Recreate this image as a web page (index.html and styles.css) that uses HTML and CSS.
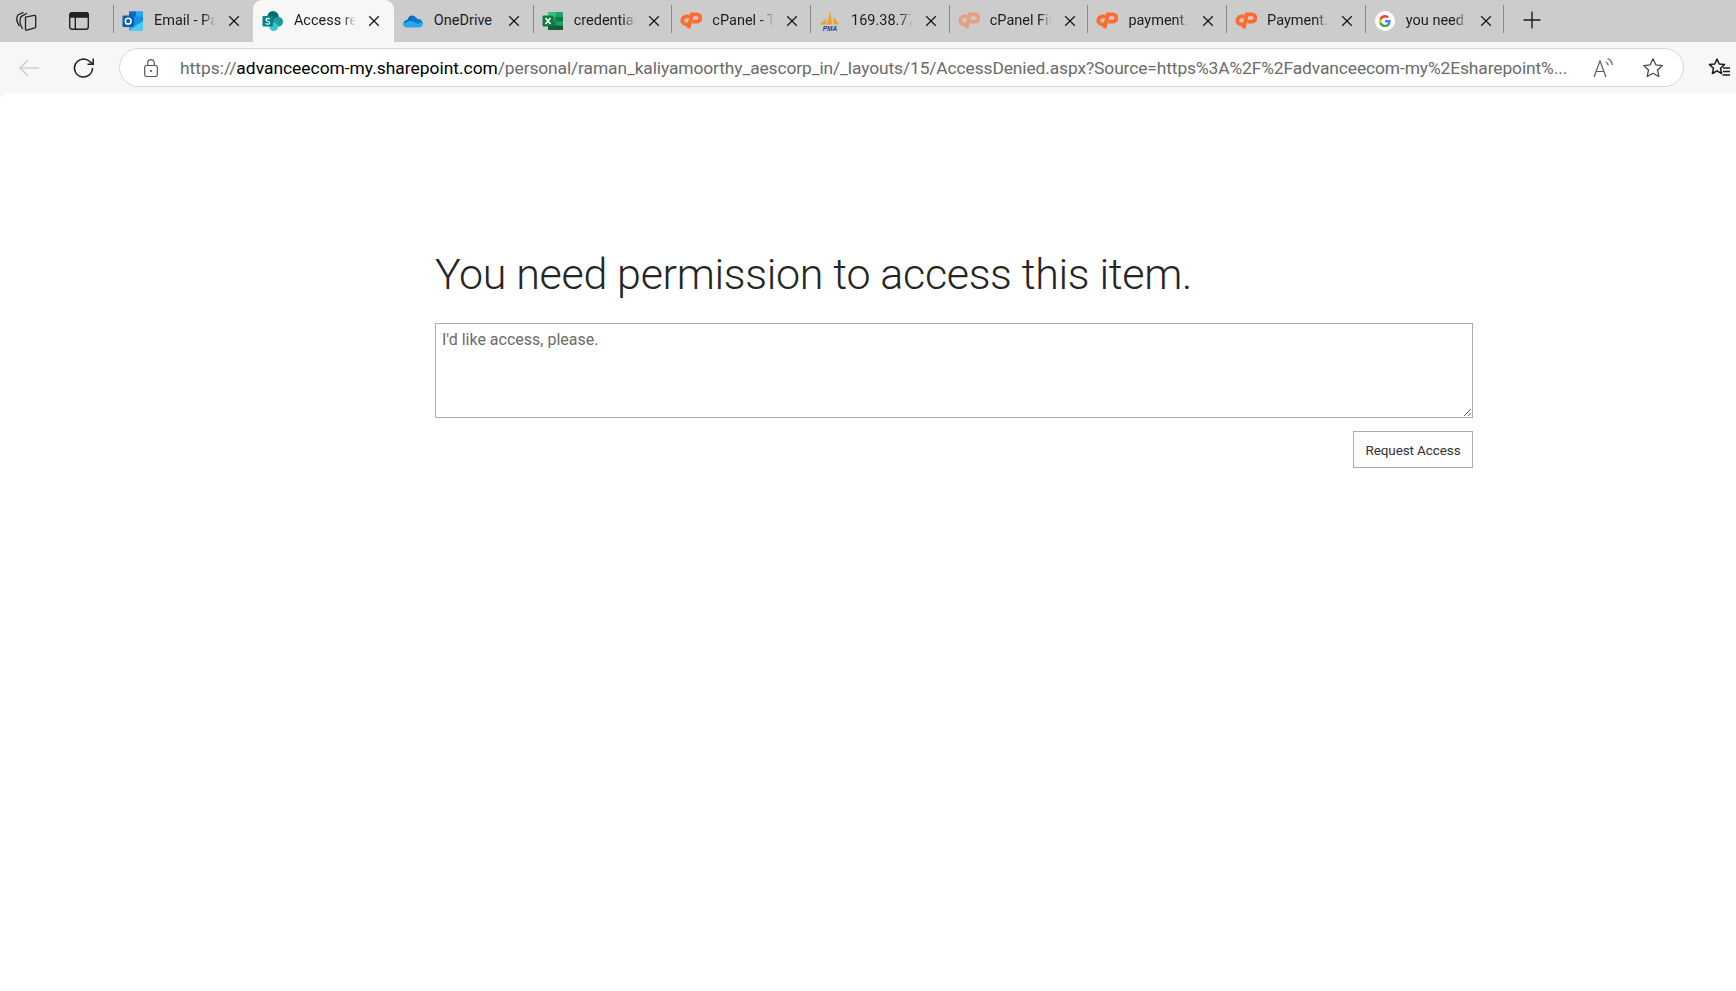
FILE: index.html
```html
<!DOCTYPE html>
<html lang="en">
<head>
<meta charset="utf-8">
<title>Access required</title>
<link rel="stylesheet" href="styles.css">
</head>
<body>
<svg class="defs" width="0" height="0" aria-hidden="true">
  <defs>
    <symbol id="cp" viewBox="0 0 24 18">
      <path d="M10.500 4.500H7A4.400 4.400 0 0 0 7 13.300H9.500" fill="none" stroke="#ff6c2c" stroke-width="4.200"/>
      <path d="M9.300 17.500L13 2.300H18.300A4 4 0 0 1 18.300 10.300H13.500" fill="none" stroke="#ff6c2c" stroke-width="4.200"/>
    </symbol>
    <symbol id="x" viewBox="0 0 12 12">
      <path d="M1.2 1.2L10.8 10.8M10.8 1.2L1.2 10.8" stroke="#1a1a1a" stroke-width="1.3" fill="none"/>
    </symbol>
  </defs>
</svg>
<div class="window">
  <header class="tabstrip">
    <div class="strip-tools">
      <svg class="ico-collections" width="24" height="24" viewBox="0 0 24 24" fill="none" stroke="#222" stroke-width="1.3" stroke-linejoin="round">
        <path d="M5.500 17C2.800 13.500 2.300 9 3.800 6L9.500 3.300"/>
        <path d="M8.700 19.800C6 16 5.400 11 7 7.600L13 4.300"/>
        <path d="M11.500 8.100L20.300 6.300C21 6.200 21.700 6.600 21.700 7.300V17.700C21.700 18.300 21.400 18.700 20.800 18.900L12.800 21.200C12.100 21.400 11.500 21 11.500 20.200Z"/>
      </svg>
      <svg class="ico-vtabs" width="22" height="20" viewBox="0 0 22 20" fill="none" stroke="#222" stroke-width="1.4">
        <rect x="1.700" y="1.700" width="18.600" height="16.600" rx="2.500"/>
        <path d="M1.700 4.200a2.500 2.500 0 0 1 2.500-2.500h13.600a2.500 2.500 0 0 1 2.500 2.500v1.800H1.700Z" fill="#222"/>
        <path d="M7.300 6V18.300"/>
      </svg>
    </div>
    <div class="tabs">
      <div class="tab wide sep">
        <svg class="fav" width="22" height="22" viewBox="0 0 22 22"><rect x="7" y="1.500" width="14" height="17" rx="1" fill="#1490df"/><rect x="7" y="1.500" width="7" height="5" fill="#0f6cbd"/><rect x="14" y="1.500" width="7" height="5" fill="#28a8ea"/><path d="M7 11L14 15.500L21 11V19.500A1 1 0 0 1 20 20.500H8A1 1 0 0 1 7 19.500Z" fill="#28a8ea"/><path d="M7 20.500L21 11V19.500A1 1 0 0 1 20 20.500Z" fill="#50d9ff" opacity=".75"/><rect x="0.500" y="5.500" width="11.500" height="11.500" rx="1" fill="#0a5fb0"/><circle cx="6.200" cy="11.200" r="2.900" fill="none" stroke="#fff" stroke-width="1.500"/></svg>
        <span class="tab-title">Email - Pa</span>
        <svg class="close" width="12" height="12"><use href="#x"/></svg>
      </div>
      <div class="tab wide active">
        <svg class="fav" width="22" height="22" viewBox="0 0 22 22"><circle cx="11" cy="6.700" r="5.700" fill="#036c70"/><circle cx="16" cy="11.700" r="5" fill="#1a9ba1"/><circle cx="11.700" cy="16.700" r="4.300" fill="#37c6d0"/><rect x="0.500" y="6" width="10.500" height="10.500" rx="1" fill="#038387"/><path d="M8 9C6.500 8 4 8.300 4 9.700C4 11.500 7.700 10.900 7.700 12.900C7.700 14.300 5 14.500 3.500 13.500" fill="none" stroke="#fff" stroke-width="1.200"/></svg>
        <span class="tab-title">Access rec</span>
        <svg class="close" width="12" height="12"><use href="#x"/></svg>
      </div>
      <div class="tab wide">
        <svg class="fav" width="22" height="22" viewBox="0 0 22 22"><path d="M9 16L14 7.500C11.500 4 6.500 5 5.700 9.500C2.800 10 1 12 1.500 14.300Z" fill="#0f6cbd"/><path d="M9 8L13.500 15L20.500 12.500C20 9.500 17.500 8.500 15.500 9C14 6.500 10.500 6 9 8Z" fill="#0f78d4"/><path d="M4.500 17.500C2.500 17.500 1 16 1.200 13.500L8.500 10.500L16 14L20.800 11.800C21.500 14.500 20 17.500 17 17.500Z" fill="#28a8ea"/></svg>
        <span class="tab-title nofade">OneDrive</span>
        <svg class="close" width="12" height="12"><use href="#x"/></svg>
      </div>
      <div class="tab sep">
        <svg class="fav" width="22" height="22" viewBox="0 0 22 22"><rect x="6" y="2" width="15" height="18" rx="1" fill="#21a366"/><rect x="6" y="2" width="7.500" height="5" fill="#33c481"/><rect x="13.500" y="7" width="7.500" height="4.500" fill="#107c41"/><rect x="6" y="11" width="7.500" height="4.500" fill="#107c41"/><rect x="6" y="15.500" width="15" height="4.500" fill="#185c37"/><rect x="0.500" y="5.500" width="11" height="11" rx="1" fill="#107c41"/><path d="M3.500 8L8.500 14M8.500 8L3.500 14" stroke="#fff" stroke-width="1.500"/></svg>
        <span class="tab-title">credential</span>
        <svg class="close" width="12" height="12"><use href="#x"/></svg>
      </div>
      <div class="tab sep">
        <svg class="fav cpanel" width="22" height="17"><use href="#cp"/></svg>
        <span class="tab-title">cPanel - T</span>
        <svg class="close" width="12" height="12"><use href="#x"/></svg>
      </div>
      <div class="tab sep">
        <svg class="fav" width="22" height="22" viewBox="0 0 22 22"><path d="M1 14.500L7 8.500L7.500 14.500ZM8 14.500L11 1L13.500 14.500ZM14.500 14.500L14.500 7L20.500 14.500Z" fill="#f0a030"/><text class="pma" x="11" y="20.700" text-anchor="middle">PMA</text></svg>
        <span class="tab-title">169.38.77</span>
        <svg class="close" width="12" height="12"><use href="#x"/></svg>
      </div>
      <div class="tab sep">
        <svg class="fav cpanel faded" width="22" height="17"><use href="#cp"/></svg>
        <span class="tab-title">cPanel Fil</span>
        <svg class="close" width="12" height="12"><use href="#x"/></svg>
      </div>
      <div class="tab sep">
        <svg class="fav cpanel" width="22" height="17"><use href="#cp"/></svg>
        <span class="tab-title">payment.</span>
        <svg class="close" width="12" height="12"><use href="#x"/></svg>
      </div>
      <div class="tab sep">
        <svg class="fav cpanel" width="22" height="17"><use href="#cp"/></svg>
        <span class="tab-title">Payment.</span>
        <svg class="close" width="12" height="12"><use href="#x"/></svg>
      </div>
      <div class="tab sep last">
        <svg class="fav" width="22" height="22" viewBox="0 0 22 22"><circle cx="11" cy="11" r="10" fill="#fff"/><path d="M16.700 11.200c0-.5 0-.9-.1-1.300H11v2.500h3.200a2.800 2.800 0 0 1-1.200 1.800v1.500h1.900c1.100-1 1.800-2.600 1.800-4.500Z" fill="#4285f4"/><path d="M11 17c1.600 0 3-.5 3.900-1.500L13 14.200c-.5.400-1.200.6-2 .6-1.600 0-2.900-1-3.400-2.500h-2v1.600A6 6 0 0 0 11 17Z" fill="#34a853"/><path d="M7.600 12.300a3.600 3.600 0 0 1 0-2.400V8.300h-2a6 6 0 0 0 0 5.600Z" fill="#fbbc05"/><path d="M11 7.400c.9 0 1.700.3 2.300.9l1.700-1.700A6 6 0 0 0 5.600 8.300l2 1.600C8.100 8.400 9.400 7.400 11 7.400Z" fill="#ea4335"/></svg>
        <span class="tab-title">you need</span>
        <svg class="close" width="12" height="12"><use href="#x"/></svg>
      </div>
      <svg class="newtab" width="20" height="20" viewBox="0 0 20 20"><path d="M10 1.500V18.500M1.500 10H18.500" stroke="#1a1a1a" stroke-width="1.400" fill="none"/></svg>
    </div>
  </header>
  <nav class="toolbar">
    <svg class="tool-back" width="24" height="24" viewBox="0 0 24 24" fill="none" stroke="#cfcfcf" stroke-width="1.500"><path d="M3 12H22M11 4L3 12L11 20"/></svg>
    <svg class="tool-reload" width="24" height="24" viewBox="0 0 24 24" fill="none" stroke="#1f1f1f" stroke-width="1.500"><path d="M20.500 12A9 9 0 1 1 17.500 5.300L21 8"/><path d="M21.200 2.500V8.300H15.500"/></svg>
    <div class="addressbar">
      <svg class="lock" width="18" height="20" viewBox="0 0 18 20" fill="none" stroke="#555" stroke-width="1.200"><rect x="2.700" y="7.500" width="12.600" height="11" rx="1.800"/><path d="M5.700 7.500V5A3.300 3.300 0 0 1 12.300 5V7.500"/><circle cx="9" cy="13" r="1" fill="#444" stroke="none"/></svg>
      <div class="url"><span class="dim">https://</span>advanceecom-my.sharepoint.com<span class="dim rest">/personal/raman_kaliyamoorthy_aescorp_in/_layouts/15/AccessDenied.aspx?Source=https%3A%2F%2Fadvanceecom-my%2Esharepoint%...</span></div>
      <svg class="read" width="24" height="22" viewBox="0 0 24 22" fill="none" stroke="#5c5c5c" stroke-width="1.200"><path d="M2 20L8 4L14 20M4.300 14.500H11.700"/><path d="M13.500 5C15 5.500 16 6.700 16.300 8.500M15.500 1.500C18.500 2.500 20 4.800 20.300 8"/></svg>
      <svg class="star" width="22" height="22" viewBox="0 0 22 22" fill="none" stroke="#4a4a4a" stroke-width="1.300" stroke-linejoin="round"><path d="M11 1.800L13.800 7.800L20.300 8.600L15.500 13L16.800 19.500L11 16.300L5.200 19.500L6.500 13L1.700 8.600L8.200 7.800Z"/></svg>
    </div>
    <svg class="favs" width="22" height="22" viewBox="0 0 22 22" fill="none" stroke="#1a1a1a" stroke-width="1.500" stroke-linejoin="round"><path d="M9 2L11.200 7L16.500 7.600L12.500 11.200L13.600 16.500L9 13.800L4.400 16.500L5.500 11.200L1.500 7.600L6.800 7Z"/><path d="M15 11H22M15 14.500H22M14.500 18H22"/></svg>
  </nav>
  <main class="page">
    <h1 class="heading">You need permission to access this item.</h1>
    <form class="request">
      <textarea class="message" placeholder="I'd like access, please."></textarea>
      <button class="submit" type="button">Request Access</button>
    </form>
  </main>
</div>
</body>
</html>
```
FILE: styles.css
```css
* { box-sizing: border-box; }
html, body { margin: 0; height: 100%; overflow: hidden; }
body { font-family: Roboto, "Open Sans", "Liberation Sans", sans-serif; background: #f7f7f7; }
.defs { position: absolute; }
.window { display: flex; flex-direction: column; height: 991px; }

.tabstrip { display: flex; height: 42px; background: #cccccc; flex: none; }
.strip-tools { display: flex; width: 113px; flex: none; align-items: center; padding-left: 14px; gap: 30px; }
.tabs { display: flex; align-items: center; height: 42px; }
.tab { position: relative; display: flex; align-items: center; width: 138.7px; height: 42px; padding-left: 9px; flex: none; }
.tab.wide { width: 139.9px; }
.tab.sep::before { content: ""; position: absolute; left: 0; top: 5px; height: 28px; width: 1px; background: #8a8a8a; }
.tab.last::after { content: ""; position: absolute; right: -1px; top: 5px; height: 28px; width: 1px; background: #8a8a8a; }
.tab.active::before { content: ""; position: absolute; left: 0; right: -1px; top: 0; bottom: 0; background: #f7f7f7; border-radius: 9px 9px 0 0; z-index: 0; }
.tab.active > * { position: relative; z-index: 1; }
.fav { flex: none; margin-right: 10px; }
.tab .cpanel { margin-top: -2px; }
.faded { opacity: .45; }
.tab-title { width: 63px; margin-top: -1px; overflow: hidden; white-space: nowrap; font-size: 14.5px; color: #1c1c1c; flex: none; -webkit-mask-image: linear-gradient(to right, #000 78%, transparent 98%); mask-image: linear-gradient(to right, #000 78%, transparent 98%); }
.tab-title.nofade { -webkit-mask-image: none; mask-image: none; overflow: visible; }
.close { flex: none; margin-left: 11px; }
.newtab { margin-left: 19px; margin-top: -2px; flex: none; }
.pma { font: italic 700 6.500px "Liberation Sans", sans-serif; fill: #2b3f8f; }

.toolbar { display: flex; align-items: center; height: 51px; padding: 0 0 0 17px; background: #f7f7f7; flex: none; }
.tool-back { flex: none; }
.tool-reload { flex: none; margin-left: 31px; }
.addressbar { display: flex; align-items: center; width: 1565px; height: 39px; margin-left: 23px; padding-left: 22px; background: #fff; border: 1px solid #d6d6d6; border-radius: 20px; flex: none; }
.lock { flex: none; }
.url { width: 1388px; margin-left: 20px; white-space: nowrap; overflow: hidden; font-size: 17.4px; color: #000; flex: none; }
.dim { color: #6b6b6b; }
.rest { letter-spacing: -.11px; }
.read { flex: none; margin-left: 24px; }
.star { flex: none; margin-left: 26px; }
.favs { flex: none; margin-left: 24px; }

.page { flex: 1; padding: 0 0 0 435px; background: #fff; border-radius: 8px 0 0 0; }
.heading { margin: 0; padding-top: 151px; font-size: 43px; font-weight: 300; letter-spacing: -.33px; line-height: 60px; color: #252525; white-space: nowrap; }
.request { display: flex; flex-direction: column; align-items: flex-end; width: 1038px; margin-top: 19px; }
.message { display: block; width: 100%; height: 95px; padding: 6px 6px; border: 1px solid #ababab; border-radius: 0; font: 16px Roboto, sans-serif; outline: none; background: #fff; }
.message::placeholder { color: #6b6b6b; opacity: 1; }
.submit { width: 120px; height: 37px; margin-top: 13px; padding: 0; background: #fdfdfd; border: 1px solid #ababab; font: 13.5px Roboto, sans-serif; letter-spacing: -.1px; color: #333; }
```
